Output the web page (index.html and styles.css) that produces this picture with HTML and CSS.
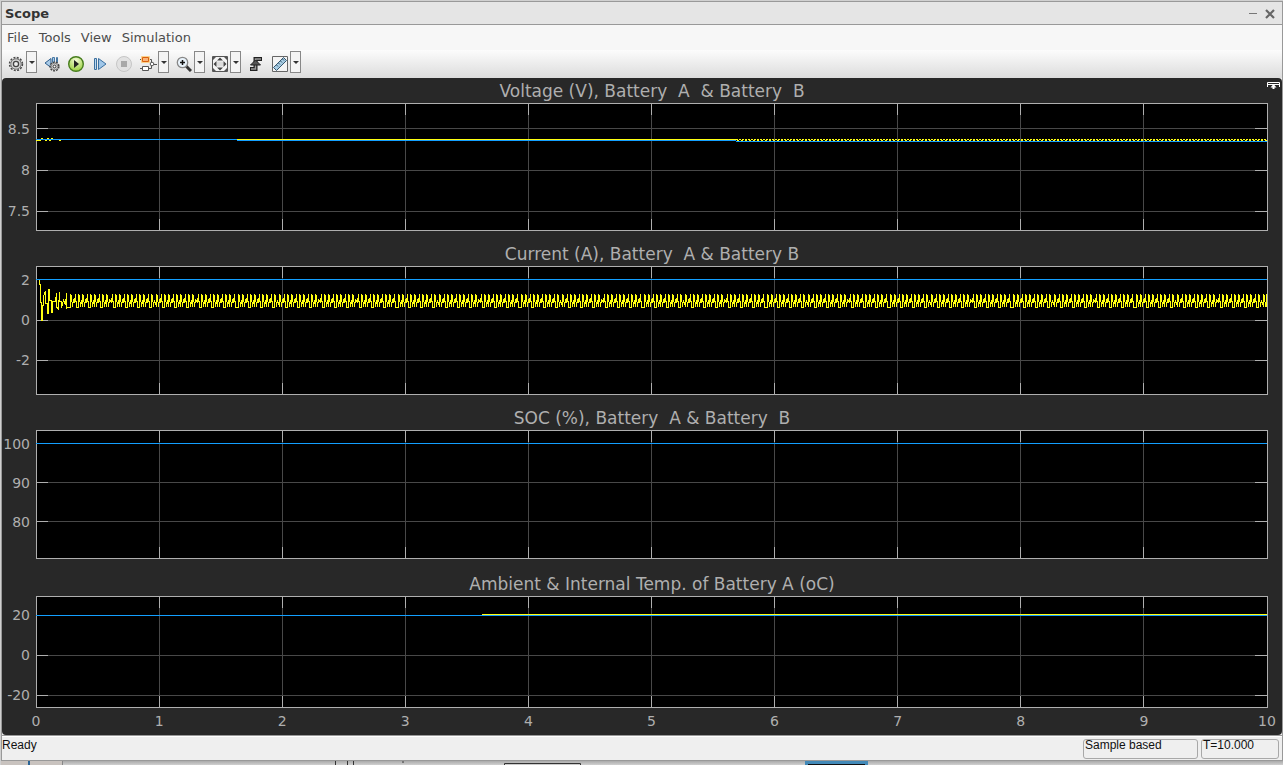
FILE: index.html
```html
<!DOCTYPE html>
<html lang="en">
<head>
<meta charset="utf-8">
<title>Scope</title>
<link rel="stylesheet" href="styles.css">
</head>
<body>
<div class="window">
  <header class="titlebar">
    <h1 class="window-title">Scope</h1>
    <div class="window-controls">
      <button class="ctl" aria-label="Minimize"><svg width="11" height="12"><path d="M1 5.500h8" stroke="#777" stroke-width="1"/></svg></button>
      <button class="ctl" aria-label="Close"><svg width="12" height="12"><path d="M2 2l8 8M10 2l-8 8" stroke="#666" stroke-width="2.200"/></svg></button>
    </div>
  </header>
  <nav class="menubar">
    <button class="menu">File</button>
    <button class="menu">Tools</button>
    <button class="menu">View</button>
    <button class="menu">Simulation</button>
  </nav>
  <div class="toolbar">
    <div class="split">
      <button class="tool" aria-label="Configuration"><svg width="16" height="16" viewBox="0 0 16 16"><circle cx="8" cy="8" r="6.4" fill="none" stroke="#4a4a4a" stroke-width="1.6" stroke-dasharray="2 1.35"/><circle cx="8" cy="8" r="5.2" fill="#d4d4d4" stroke="#777"/><circle cx="8" cy="8" r="2.6" fill="#eee" stroke="#444" stroke-width="1.3"/></svg></button>
      <button class="drop" aria-label="Configuration options"></button>
    </div>
    <button class="tool" aria-label="Stepping options"><svg width="16" height="16" viewBox="0 0 16 16"><path d="M7 2.500v9L1 7z" fill="#a9cbe8" stroke="#2f5f8e"/><path d="M8.500 1.500h2v6h-2zM12.500 1.500h1v5h-1z" fill="#a9cbe8" stroke="#4878a4"/><circle cx="10.500" cy="10.500" r="4.300" fill="#ddd" stroke="#444" stroke-width="1.600" stroke-dasharray="2 1"/><circle cx="10.500" cy="10.500" r="3.300" fill="#d0d0d0" stroke="#888"/><circle cx="10.500" cy="10.500" r="1.400" fill="#fff" stroke="#333"/></svg></button>
    <button class="tool" aria-label="Run"><svg width="18" height="18" viewBox="0 0 18 18"><defs><radialGradient id="run" cx="50%" cy="25%" r="75%"><stop offset="0" stop-color="#f4fbd8"/><stop offset="1" stop-color="#98cf3b"/></radialGradient></defs><circle cx="9" cy="9" r="7.300" fill="url(#run)" stroke="#477d1e" stroke-width="1.400"/><path d="M7 5v8l5-4z" fill="#222"/></svg></button>
    <button class="tool" aria-label="Step forward"><svg width="16" height="16" viewBox="0 0 16 16"><path d="M2.500 2.500h2v11h-2z" fill="#bcd8ef" stroke="#3a6f9f"/><path d="M6.500 2.500v11L14 8z" fill="#9fc6e8" stroke="#3a6f9f"/></svg></button>
    <button class="tool" aria-label="Stop" disabled><svg width="18" height="18" viewBox="0 0 18 18"><circle cx="9" cy="9" r="7.500" fill="#e2e2e2" stroke="#c6c6c6"/><path d="M6 6h6v6H6z" fill="#a9a9a9"/></svg></button>
    <div class="split">
      <button class="tool" aria-label="Highlight block"><svg width="18" height="18" viewBox="0 0 18 18"><path d="M1 4.500h3M10 4.500h2.500v3M1 13.500h3M9 13.500h3.500v-3M15 9.500h3" fill="none" stroke="#555"/><path d="M2.500 1.500h8v6h-8z" fill="#ffe0a0" stroke="#fbd08a"/><path d="M3.500 2.500h6v4h-6z" fill="#f9b47a" stroke="#d9600f"/><path d="M3.500 11.500h6v4h-6z" fill="#fff" stroke="#555"/><circle cx="13" cy="9" r="1.800" fill="#fff" stroke="#555"/></svg></button>
      <button class="drop" aria-label="Highlight options"></button>
    </div>
    <div class="split">
      <button class="tool" aria-label="Zoom"><svg width="16" height="16" viewBox="0 0 16 16"><path d="M10 10l5 5" stroke="#333" stroke-width="3"/><circle cx="6.500" cy="6.500" r="5.200" fill="#e9f3fb" stroke="#888" stroke-width="1.300"/><path d="M6.500 4v5M4 6.500h5" stroke="#111" stroke-width="1.500"/></svg></button>
      <button class="drop" aria-label="Zoom options"></button>
    </div>
    <div class="split">
      <button class="tool" aria-label="Scale axes"><svg width="16" height="16" viewBox="0 0 16 16"><path d="M.5.500h15v15H.5z" fill="#f4f4f4" stroke="#555"/><path d="M8 1.500l3 3H5zM8 14.500l3-3H5zM1.500 8l3-3v6zM14.500 8l-3-3v6z" fill="#444"/><path d="M1 1h3L1 4zM15 1h-3l3 3zM1 15h3l-3-3zM15 15h-3l3-3z" fill="#555"/><path d="M5 5.500h6v5H5z" fill="#dcdcdc"/></svg></button>
      <button class="drop" aria-label="Scale options"></button>
    </div>
    <button class="tool" aria-label="Triggers"><svg width="16" height="16" viewBox="0 0 16 16"><path d="M2 13h5.500V3H14" fill="none" stroke="#222" stroke-width="4"/><path d="M3 13h4.500V3H13" fill="none" stroke="#999" stroke-width="1.500"/><path d="M7.500 4l5 5h-10z" fill="#555" stroke="#222"/></svg></button>
    <div class="split">
      <button class="tool" aria-label="Measurements"><svg width="16" height="16" viewBox="0 0 16 16"><path d="M.5.500h15v15H.5z" fill="#f4f4f4" stroke="#666"/><path d="M1.500 11.500l10-10 3 3-10 10z" fill="#a8cde4" stroke="#35566e"/><path d="M4.500 9l1.500 1.500M6.500 7L8 8.500M8.500 5l1.500 1.500M10.500 3L12 4.500" stroke="#35566e"/></svg></button>
      <button class="drop" aria-label="Measurement options"></button>
    </div>
  </div>

  <main class="scope">
    <button class="maximize" aria-label="Maximize axes"><svg width="13" height="7"><path d="M.5 5V.5h12V5M1 2.500h11" fill="none" stroke="#fff"/><path d="M6.500 2l3 3.500H7.500V7h-2V5.500h-2z" fill="#fff"/></svg></button>
    <section class="panel">
      <h2 class="panel-title">Voltage (V), Battery  A  &amp; Battery  B</h2>
      <div class="ylabels voltage-labels"><span>8.5</span><span>8</span><span>7.5</span></div>
      <svg class="plot" id="voltage" height="128"></svg>
    </section>
    <section class="panel">
      <h2 class="panel-title spaced">Current (A), Battery  A &amp; Battery B</h2>
      <div class="ylabels current-labels"><span>2</span><span>0</span><span>-2</span></div>
      <svg class="plot" id="current" height="129"></svg>
    </section>
    <section class="panel">
      <h2 class="panel-title spaced">SOC (%), Battery  A &amp; Battery  B</h2>
      <div class="ylabels soc-labels"><span>100</span><span>90</span><span>80</span></div>
      <svg class="plot" id="soc" height="129"></svg>
    </section>
    <section class="panel">
      <h2 class="panel-title spaced last">Ambient &amp; Internal Temp. of Battery A (oC)</h2>
      <div class="ylabels temp-labels"><span>20</span><span>0</span><span>-20</span></div>
      <svg class="plot" id="temp" height="112"></svg>
    </section>
    <div class="xlabels"><span>0</span><span>1</span><span>2</span><span>3</span><span>4</span><span>5</span><span>6</span><span>7</span><span>8</span><span>9</span><span>10</span></div>
  </main>

  <footer class="statusbar">
    <span class="status">Ready</span>
    <span class="field sample">Sample based</span>
    <span class="field time">T=10.000</span>
  </footer>
</div>
<div class="desktop" aria-hidden="true">
  <svg width="1282" height="4"><path d="M0 0h61v4H0z" fill="#c9c3bf"/><path d="M27 0h2v4h-2z" fill="#2a6496"/><path d="M61.500 0v4" stroke="#888"/><path d="M334.500 0v4M346.500 0v4M352.500 0v4" stroke="#333"/><path d="M503.500 4V2.500h76V4" fill="none" stroke="#333"/><path d="M804 0h63v4h-63z" fill="#4289b8"/><path d="M807 3h57v1h-57z" fill="#111"/><path d="M401 0h2v2h-2z" fill="#777"/></svg>
</div>
<script src="plots.js"></script>
</body>
</html>
```
FILE: styles.css
```css
* { box-sizing: border-box; }
body {
  margin: 0;
  min-height: 100vh;
  padding: 1px 0 0 1px;
  background: #d0d0d0;
  font-family: "DejaVu Sans", sans-serif;
  font-size: 13px;
  overflow: hidden;
}
button { border: 0; padding: 0; margin: 0; background: none; font: inherit; color: inherit; }
svg { display: block; }
.window { border: 1px solid #999; background: #efefef; }
.titlebar {
  display: flex;
  align-items: center;
  justify-content: space-between;
  height: 23px;
  padding: 1px 6px 0 3px;
  background: #e5e5e5;
  border-bottom: 1px solid #999;
}
.window-title { margin: 0; font-size: 13px; line-height: 21px; color: #333; }
.window-controls { display: flex; gap: 5px; }
.menubar {
  display: flex;
  gap: 10px;
  height: 25px;
  padding: 0 5px;
  background: #f7f7f7;
  color: #4c4c4c;
}
.menu { line-height: 25px; }
.toolbar {
  display: flex;
  gap: 4px;
  height: 28px;
  padding: 1px 4px 4px;
  background: linear-gradient(#fcfcfc, #dcdcdc);
}
.split { display: flex; margin-right: 1px; }
.tool { display: flex; align-items: center; justify-content: center; width: 20px; height: 25px; }
.drop {
  width: 11px;
  height: 22px;
  display: flex;
  align-items: center;
  justify-content: center;
  border: 1px solid #888;
  background: #f4f4f4;
}
.drop::before { content: ""; border: 3px solid transparent; border-top-color: #333; border-bottom: 0; }
.scope {
  position: relative;
  background: #282828;
  border-radius: 4px;
  color: #afafaf;
}
.maximize { position: absolute; top: 4px; right: 2px; }
.panel { display: grid; grid-template-columns: 34px 1fr; padding-right: 14px; }
.panel-title {
  grid-column: 2;
  margin: 0;
  padding-top: 2px;
  font-size: 17px;
  font-weight: normal;
  line-height: 23px;
  text-align: center;
  white-space: pre;
}
.spaced { padding-top: 12px; }
.last { padding-top: 14px; }
.ylabels {
  display: flex;
  flex-direction: column;
  padding-right: 6px;
  font-size: 14px;
  line-height: 20px;
  text-align: right;
}
.voltage-labels { padding-top: 16px; gap: 21px; }
.current-labels { padding-top: 4px; gap: 20px; }
.soc-labels { padding-top: 4px; gap: 19px; }
.temp-labels { padding-top: 9px; gap: 20px; }
.plot { width: 100%; background: #000; }
.xlabels {
  display: flex;
  justify-content: space-between;
  padding-left: 19px;
  font-size: 14px;
  line-height: 27px;
}
.xlabels span { width: 30px; text-align: center; }
.frame { fill: none; stroke: #afafaf; }
.tick { stroke: #afafaf; }
.grid { stroke: #484848; }
.blue { fill: none; stroke: #139fff; }
.yellow { fill: none; stroke: #ffff11; }
.statusbar {
  display: flex;
  gap: 3px;
  height: 25px;
  padding: 3px 3px 1px 0;
  border-top: 1px solid #999;
  box-shadow: inset 0 1px #fff;
  font: 12px/13px "Liberation Sans", Arial, sans-serif;
  color: #111;
}
.status { flex: 1; }
.field { border: 1px solid #a8a8a8; border-radius: 3px; padding-left: 1px; line-height: 11px; }
.sample { width: 115px; }
.time { width: 78px; }
.desktop { height: 4px; overflow: hidden; background: linear-gradient(#aaa, #d0d0d0); }
```
FILE: plots.js
```js
const SVG = "http://www.w3.org/2000/svg";
const W = 1232;

function line(svg, cls, d, dash) {
  const p = document.createElementNS(SVG, "path");
  p.setAttribute("class", cls);
  p.setAttribute("d", d);
  p.setAttribute("shape-rendering", "crispEdges");
  if (dash) p.setAttribute("stroke-dasharray", dash);
  svg.appendChild(p);
}

function axes(id, h, ticks) {
  const svg = document.getElementById(id);
  svg.setAttribute("viewBox", `0 0 ${W} ${h}`);
  svg.setAttribute("preserveAspectRatio", "none");
  for (const y of ticks) line(svg, "grid", `M0 ${y + .5}H${W}`);
  for (let i = 1; i < 10; i++) line(svg, "grid", `M${i * 123 + .5} 0V${h}`);
  for (const y of ticks) line(svg, "tick", `M0 ${y + .5}H12M${W - 13} ${y + .5}H${W}`);
  for (let i = 1; i < 10; i++) line(svg, "tick", `M${i * 123 + .5} 0V12M${i * 123 + .5} ${h - 12}V${h}`);
  line(svg, "frame", `M.5 .5H${W - .5}V${h - .5}H.5Z`);
  return svg;
}

const voltage = axes("voltage", 128, [25, 67, 108]);
line(voltage, "blue", "M0 36.5H201M201 37.5H700M700 38.5H1231");
line(voltage, "yellow", "M201 36.5H700M0 37.5H5M5 35.5H7M9 37.5H11M11 35.5H13M13 37.5H15M15 35.5H17M23 37.5H25");
line(voltage, "yellow", "M700 36.5H1231", "2 1");
line(voltage, "yellow", "M701 37.5H1231", "2 2");

const current = axes("current", 129, [13, 54, 94]);
line(current, "blue", "M0 13.5H1231");
let wave = "M3.5 14V18H4.5V36H5.5V54H6.5V39H7.5V30L9.5 25V37H11.5V47H12.5V23H13.5V34H15.5V46H16.5V35H19.5L20.5 27V41L22.5 43L23.5 26V35H25.5V42L27.5 34L29.5 39L30.5 27V42";
// The first column of each cycle is the full swing, the rest step down to the trough.
for (let x = 33.5, n = 0; x < 1227; x += 4.1, n++) {
  const c = Math.round(x) + .5;
  wave += n % 3 === 1
    ? `L${c} 36L${c + 1} 28V34L${c + 2} 37V41`
    : `L${c} 41V28L${c + 1} 30L${c + 2} 41L${c + 3} 34`;
}
line(current, "yellow", wave + "L1230.5 28V41");

const soc = axes("soc", 129, [13, 52, 91]);
line(soc, "blue", "M0 13.5H1231");

const temp = axes("temp", 112, [19, 59, 99]);
line(temp, "blue", "M0 19.5H1231");
line(temp, "yellow", "M446 18.5H1231");
```
